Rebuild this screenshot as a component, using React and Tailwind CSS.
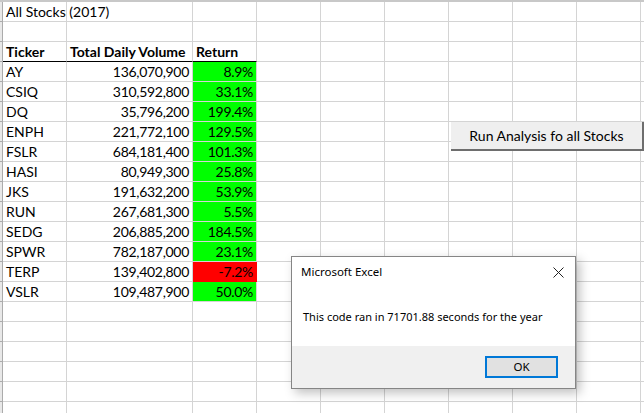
import React from 'react';

const rows = [
  ['AY', '136,070,900', '8.9%', 'g'],
  ['CSIQ', '310,592,800', '33.1%', 'g'],
  ['DQ', '35,796,200', '199.4%', 'g'],
  ['ENPH', '221,772,100', '129.5%', 'g'],
  ['FSLR', '684,181,400', '101.3%', 'g'],
  ['HASI', '80,949,300', '25.8%', 'g'],
  ['JKS', '191,632,200', '53.9%', 'g'],
  ['RUN', '267,681,300', '5.5%', 'g'],
  ['SEDG', '206,885,200', '184.5%', 'g'],
  ['SPWR', '782,187,000', '23.1%', 'g'],
  ['TERP', '139,402,800', '-7.2%', 'r'],
  ['VSLR', '109,487,900', '50.0%', 'g'],
];

const cell = 'h-5 shrink-0 border-r border-b border-[#d4d4d4] flex items-end pb-[2px] px-[3px] leading-none whitespace-nowrap';

function Blanks() {
  return (
    <>
      {[0, 1, 2, 3, 4, 5, 6].map((i) => (
        <div key={i} className={`${cell} w-16`} />
      ))}
    </>
  );
}

function Row({ a, b, c, fill, bold, head }) {
  const fillCls = fill === 'g' ? 'bg-[#00ff00] border-[#00ff00]' : fill === 'r' ? 'bg-[#ff0000] border-[#ff0000]' : '';
  const line = head ? 'border-b-black' : '';
  return (
    <div className="flex">
      <div className="w-[3px] h-5 shrink-0 bg-[#e8e8e8] border-r border-b border-[#ababab]" />
      <div className={`${cell} w-16 ${line} ${bold ? 'font-bold' : ''} overflow-visible relative z-10`}>{a}</div>
      <div className={`${cell} w-[126px] ${line} ${bold ? 'font-bold justify-start' : 'justify-end tracking-[-0.3px]'}`}>{b}</div>
      <div className={`${cell} w-16 ${fillCls} ${line} ${bold ? 'font-bold justify-start' : 'justify-end tracking-[-0.3px]'}`}>{c}</div>
      <Blanks />
    </div>
  );
}

export default function App() {
  return (
    <div className="relative w-[644px] h-[413px] overflow-hidden bg-white text-[14px] text-black" style={{ fontFamily: 'Lato, "Liberation Sans", sans-serif' }}>
      <div className="h-[2px] bg-[#c8c8c8]" />
      <div className="flex flex-col">
        <Row a="All Stocks (2017)" />
        <Row />
        <Row a="Ticker" b="Total Daily Volume" c="Return" bold head />
        {rows.map(([t, v, r, f]) => (
          <Row key={t} a={t} b={v} c={r} fill={f} />
        ))}
        <Row />
        <Row />
        <Row />
        <Row />
        <Row />
        <Row />
      </div>

      {/* sheet button */}
      <div className="absolute left-[451px] top-[122px] w-[193px] h-[29px] bg-[#efefef] border-r-2 border-b-2 border-[#6e6e6e] flex items-center justify-center text-[14px]">
        Run Analysis fo all Stocks
      </div>

      {/* message box */}
      <div
        className="absolute left-[291px] top-[256px] w-[285px] h-[133px] bg-white border border-[#858585] shadow-[4px_4px_10px_rgba(0,0,0,0.25)] flex flex-col text-[11px]"
        style={{ fontFamily: '"Noto Sans", "Open Sans", sans-serif' }}
      >
        <div className="h-[30px] flex items-center justify-between pl-[9px] pr-[11px]">
          <span className="text-[11.5px]">Microsoft Excel</span>
          <svg width="11" height="11" viewBox="0 0 11 11" className="mt-[1px]">
            <path d="M0.5 0.5 L10.5 10.5 M10.5 0.5 L0.5 10.5" stroke="#222" strokeWidth="1" />
          </svg>
        </div>
        <div className="flex-1 flex items-center pl-[11px] pt-[1px]">This code ran in 71701.88 seconds for the year</div>
        <div className="h-[42px] bg-[#f0f0f0] flex items-center justify-end pr-[17px]">
          <div className="w-[73px] h-[22px] border-2 border-[#0078d7] bg-[#e1e1e1] flex items-center justify-center text-[11.5px]">OK</div>
        </div>
      </div>
    </div>
  );
}
